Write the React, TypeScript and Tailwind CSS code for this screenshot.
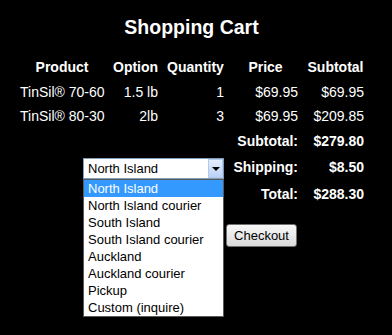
import React from 'react'

interface CartItem {
  product: string
  option: string
  qty: number
  price: string
  subtotal: string
}

const items: CartItem[] = [
  { product: 'TinSil® 70-60', option: '1.5 lb', qty: 1, price: '$69.95', subtotal: '$69.95' },
  { product: 'TinSil® 80-30', option: '2lb', qty: 3, price: '$69.95', subtotal: '$209.85' },
]

const shippingOptions = [
  'North Island',
  'North Island courier',
  'South Island',
  'South Island courier',
  'Auckland',
  'Auckland courier',
  'Pickup',
  'Custom (inquire)',
]

const row = 'grid grid-cols-[84px_45px_57px_65px_57px] gap-x-[9px] text-[14px] leading-[16px]'

const ShippingSelect = () => {
  return (
    <div className="relative w-[141px] h-[21px] text-[13px] text-black text-left">
      <div className="flex h-full border border-[#7f9db9] bg-white">
        <span className="flex-1 pl-[4px] leading-[19px] whitespace-nowrap">North Island</span>
        <span className="w-[15px] h-full flex items-center justify-center border border-[#b5c9ec] bg-gradient-to-b from-[#e4eefd] to-[#bcd1f6]">
          <span className="w-0 h-0 border-l-[4px] border-r-[4px] border-t-[4px] border-l-transparent border-r-transparent border-t-black" />
        </span>
      </div>
      {/* open list */}
      <ul className="absolute left-0 top-[21px] w-[141px] bg-white border border-[#5a5a5a] z-10">
        {shippingOptions.map((opt, i) => (
          <li
            key={opt}
            className={
              i === 0
                ? 'h-[17px] leading-[17px] pl-[4px] bg-[#3399ff] text-white whitespace-nowrap'
                : 'h-[17px] leading-[17px] pl-[4px] whitespace-nowrap'
            }
          >
            {opt}
          </li>
        ))}
      </ul>
    </div>
  )
}

export default function App() {
  return (
    <div className="w-[392px] h-[335px] bg-black text-white overflow-hidden font-['Liberation_Sans',Arial,sans-serif]">
      <h1 className="w-[383px] pt-[15px] text-center text-[19.5px] font-bold leading-[24px]">Shopping Cart</h1>

      <div className="ml-[20px] mt-[20px]">
        {/* header */}
        <div className={`${row} h-[25px] font-bold text-center`}>
          <div>Product</div>
          <div>Option</div>
          <div>Quantity</div>
          <div>Price</div>
          <div>Subtotal</div>
        </div>

        {items.map((it, i) => (
          <div key={it.product} className={`${row} ${i === 0 ? 'h-[24px]' : 'h-[25px]'} text-right`}>
            <div className="text-left whitespace-nowrap">{it.product}</div>
            <div className="whitespace-nowrap">{it.option}</div>
            <div>{it.qty}</div>
            <div>{it.price}</div>
            <div>{it.subtotal}</div>
          </div>
        ))}

        <div className={`${row} h-[25px] font-bold text-right`}>
          <div className="col-start-4">Subtotal:</div>
          <div>$279.80</div>
        </div>

        <div className={`${row} h-[28px] font-bold text-right`}>
          <div className="col-span-3 flex justify-end font-normal">
            <ShippingSelect />
          </div>
          <div className="pt-[1px]">Shipping:</div>
          <div className="pt-[1px]">$8.50</div>
        </div>

        <div className={`${row} h-[38px] font-bold text-right`}>
          <div className="col-start-4">Total:</div>
          <div>$288.30</div>
        </div>

        <div className={row}>
          <div className="col-start-4 flex justify-end mr-[1px]">
            <button className="shrink-0 w-[71px] h-[23px] text-[13px] leading-[21px] text-black border border-[#707070] rounded-[3px] bg-gradient-to-b from-[#f8f8f8] to-[#dadada]">
              Checkout
            </button>
          </div>
        </div>
      </div>
    </div>
  )
}
